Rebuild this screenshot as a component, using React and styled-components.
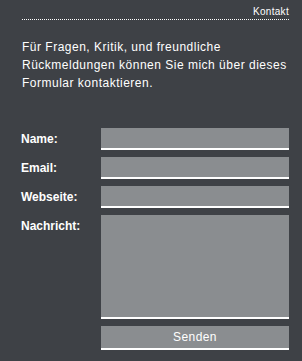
import React from "react";
import styled, { createGlobalStyle } from "styled-components";

const GlobalStyle = createGlobalStyle`
  html, body {
    margin: 0;
    padding: 0;
    background: #3e4146;
  }
  body {
    font-family: "Liberation Sans", Arial, sans-serif;
    color: #ffffff;
  }
`;

const Page = styled.div`
  width: 302px;
  height: 361px;
  box-sizing: border-box;
  padding: 0 13px 0 22px;
  background: #3e4146;
`;

const Header = styled.div`
  text-align: right;
  font-size: 10px;
  line-height: 12px;
  padding-top: 6px;
  padding-bottom: 1px;
  border-bottom: 1px dotted #ffffff;
  letter-spacing: 0.3px;
`;

const Intro = styled.p`
  margin: 18px 0 0;
  font-size: 12px;
  line-height: 18px;
  letter-spacing: 0.5px;
`;

const Form = styled.form`
  margin-top: 36px;
  display: flex;
  flex-direction: column;
  gap: 7px;
`;

const Row = styled.div`
  display: grid;
  grid-template-columns: 79px 188px;
  align-items: start;
`;

const Label = styled.label`
  font-size: 12px;
  font-weight: bold;
  line-height: 14px;
  padding-top: 4px;
  margin-left: -1px;
`;

const Field = styled.input`
  box-sizing: border-box;
  width: 188px;
  height: 22px;
  margin: 0;
  padding: 0 4px;
  border: none;
  border-bottom: 2px solid #ffffff;
  background: #8a8d90;
  color: #ffffff;
  outline: none;
  font: 12px "Liberation Sans", Arial, sans-serif;
`;

const Area = styled.textarea`
  box-sizing: border-box;
  width: 188px;
  height: 104px;
  margin: 0;
  padding: 4px;
  border: none;
  border-bottom: 2px solid #ffffff;
  background: #8a8d90;
  color: #ffffff;
  outline: none;
  resize: none;
  display: block;
  font: 12px "Liberation Sans", Arial, sans-serif;
`;

const Button = styled.button`
  box-sizing: border-box;
  width: 188px;
  height: 24px;
  margin: 0;
  padding: 0;
  border: none;
  border-bottom: 2px solid #ffffff;
  background: #8a8d90;
  color: #ffffff;
  font: 12px "Liberation Sans", Arial, sans-serif;
  letter-spacing: 0.4px;
  cursor: pointer;
`;

export default function App() {
  return (
    <>
      <GlobalStyle />
      <Page>
        <Header>Kontakt</Header>
        <Intro>
          Für Fragen, Kritik, und freundliche Rückmeldungen können Sie mich
          über dieses Formular kontaktieren.
        </Intro>
        <Form onSubmit={(e) => e.preventDefault()}>
          <Row>
            <Label>Name:</Label>
            <Field type="text" />
          </Row>
          <Row>
            <Label>Email:</Label>
            <Field type="text" />
          </Row>
          <Row>
            <Label>Webseite:</Label>
            <Field type="text" />
          </Row>
          <Row>
            <Label>Nachricht:</Label>
            <Area />
          </Row>
          <Row>
            <span />
            <Button type="submit">Senden</Button>
          </Row>
        </Form>
      </Page>
    </>
  );
}
